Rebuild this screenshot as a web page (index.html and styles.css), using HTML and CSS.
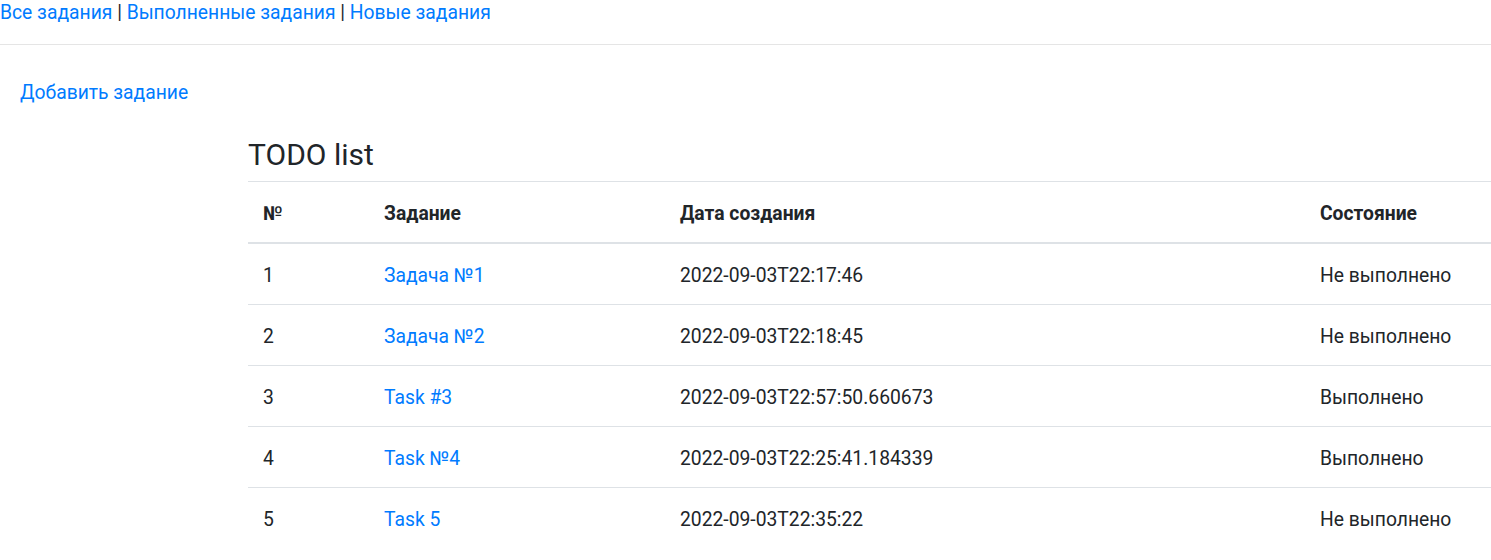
FILE: index.html
```html
<!DOCTYPE html>
<html lang="ru">
<head>
<meta charset="utf-8">
<title>TODO list</title>
<link rel="stylesheet" href="styles.css">
</head>
<body>
<nav class="topnav">
  <a href="#">Все задания</a> | <a href="#">Выполненные задания</a> | <a href="#">Новые задания</a>
</nav>
<hr class="divider">
<div class="add"><a href="#">Добавить задание</a></div>
<main class="content">
  <h3 class="title">TODO list</h3>
  <table class="table">
    <colgroup>
      <col class="c1"><col class="c2"><col class="c3"><col class="c4">
    </colgroup>
    <thead>
      <tr><th>№</th><th>Задание</th><th>Дата создания</th><th>Состояние</th></tr>
    </thead>
    <tbody>
      <tr><td>1</td><td><a href="#">Задача №1</a></td><td>2022-09-03T22:17:46</td><td>Не выполнено</td></tr>
      <tr><td>2</td><td><a href="#">Задача №2</a></td><td>2022-09-03T22:18:45</td><td>Не выполнено</td></tr>
      <tr><td>3</td><td><a href="#">Task #3</a></td><td>2022-09-03T22:57:50.660673</td><td>Выполнено</td></tr>
      <tr><td>4</td><td><a href="#">Task №4</a></td><td>2022-09-03T22:25:41.184339</td><td>Выполнено</td></tr>
      <tr><td>5</td><td><a href="#">Task 5</a></td><td>2022-09-03T22:35:22</td><td>Не выполнено</td></tr>
    </tbody>
  </table>
</main>
</body>
</html>
```
FILE: styles.css
```css
html, body {
  margin: 0;
  padding: 0;
}
body {
  font-family: Roboto, "Noto Sans", sans-serif;
  font-size: 19.3px;
  line-height: 30px;
  color: #212529;
  background: #fff;
  overflow: hidden;
}
a {
  color: #007bff;
  text-decoration: none;
}
.topnav {
  line-height: 24px;
  height: 23px;
  padding-top: 1px;
}
.divider {
  margin: 20px 0 0 0;
  border: 0;
  border-top: 1px solid rgba(0, 0, 0, 0.1);
  height: 0;
}
.add {
  margin-top: 33px;
  padding-left: 20px;
}
.content {
  margin-left: 248px;
  width: 1243px;
  margin-top: 29px;
}
.title {
  margin: 0 0 8px 0;
  font-size: 30px;
  font-weight: 400;
  line-height: 36px;
}
.table {
  width: 100%;
  border-collapse: collapse;
  table-layout: fixed;
}
.c1 { width: 121px; }
.c2 { width: 296px; }
.c3 { width: 640px; }
.table th, .table td {
  text-align: left;
  padding: 17px 15px 13px 15px;
  border-top: 1px solid #dee2e6;
  vertical-align: top;
  white-space: nowrap;
}
.table thead th {
  font-weight: 700;
  border-bottom: 2px solid #dee2e6;
}
.table tbody tr:first-child td {
  border-top: 0;
}
```
